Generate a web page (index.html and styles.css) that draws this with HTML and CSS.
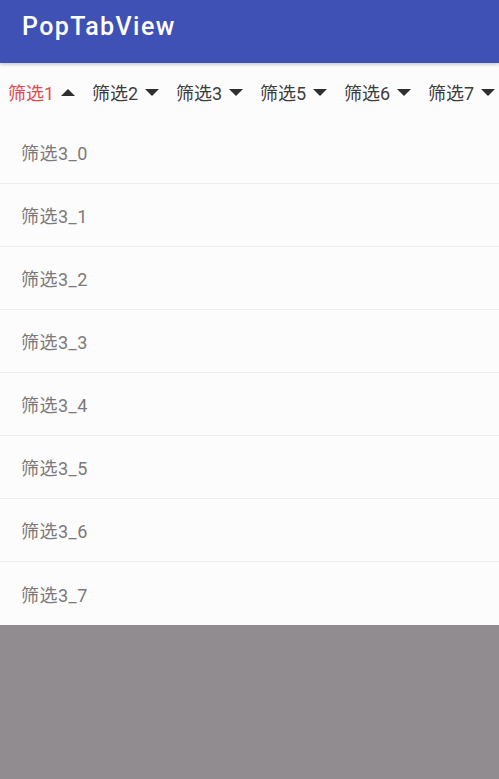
FILE: index.html
```html
<!DOCTYPE html>
<html lang="en">
<head>
  <meta charset="UTF-8" />
  <meta name="viewport" content="width=device-width, initial-scale=1.0"/>
  <title>PopTabView</title>
  <link rel="stylesheet" href="styles.css">
</head>
<body>
<div id="screen">
  <div id="app-bar">PopTabView</div>

  <!-- Filter tabs -->
  <div id="tab-bar">
    <div class="tab active"><span>筛选1</span><i class="arrow up"></i></div>
    <div class="tab"><span>筛选2</span><i class="arrow"></i></div>
    <div class="tab"><span>筛选3</span><i class="arrow"></i></div>
    <div class="tab"><span>筛选5</span><i class="arrow"></i></div>
    <div class="tab"><span>筛选6</span><i class="arrow"></i></div>
    <div class="tab"><span>筛选7</span><i class="arrow"></i></div>
  </div>

  <!-- Popup list -->
  <div id="pop-list">
    <div class="item">筛选3_0</div>
    <div class="item">筛选3_1</div>
    <div class="item">筛选3_2</div>
    <div class="item">筛选3_3</div>
    <div class="item">筛选3_4</div>
    <div class="item">筛选3_5</div>
    <div class="item">筛选3_6</div>
    <div class="item">筛选3_7</div>
  </div>

  <div id="dim"></div>
</div>
</body>
</html>
```

FILE: styles.css
```css
/* Reset default margins */
body, html {
  margin: 0;
  padding: 0;
}

#screen {
  width: 499px;
  height: 779px;
  display: flex;
  flex-direction: column;
  background-color: #fdfcfd;
  font-family: Roboto, "Noto Sans CJK SC", sans-serif;
  overflow: hidden;
}

/* Title bar at the top */
#app-bar {
  height: 63px;
  flex-shrink: 0;
  box-sizing: border-box;
  padding: 12px 0 0 22px;
  line-height: 29px;
  background-color: #3f51b5;
  color: #fff;
  font-size: 25px;
  font-weight: 500;
  letter-spacing: 1.4px;
  box-shadow: 0 2px 3px rgba(0, 0, 0, 0.18);
  position: relative;
  z-index: 1;
}

#tab-bar {
  height: 58px;
  flex-shrink: 0;
  display: flex;
  align-items: center;
  padding-left: 8px;
  white-space: nowrap;
}
.tab {
  width: 84px;
  flex-shrink: 0;
  display: flex;
  align-items: center;
  gap: 7px;
  font-size: 18px;
  color: #3d3d3d;
}
.tab.active {
  color: #e2494e;
}
.arrow {
  width: 0;
  height: 0;
  border-left: 7px solid transparent;
  border-right: 7px solid transparent;
  border-top: 7px solid #2e2e2e;
}
.arrow.up {
  border-top: none;
  border-bottom: 7px solid #2e2e2e;
}

/* Dropdown list */
#pop-list {
  flex-shrink: 0;
}
.item {
  height: 63px;
  box-sizing: border-box;
  padding: 0 21px;
  display: flex;
  align-items: center;
  border-bottom: 1px solid #eeedee;
  font-size: 18px;
  letter-spacing: 0.5px;
  color: #7a7a7a;
}
.item:last-child {
  border-bottom: none;
}

#dim {
  flex: 1;
  background-color: #918c90;
}
```
